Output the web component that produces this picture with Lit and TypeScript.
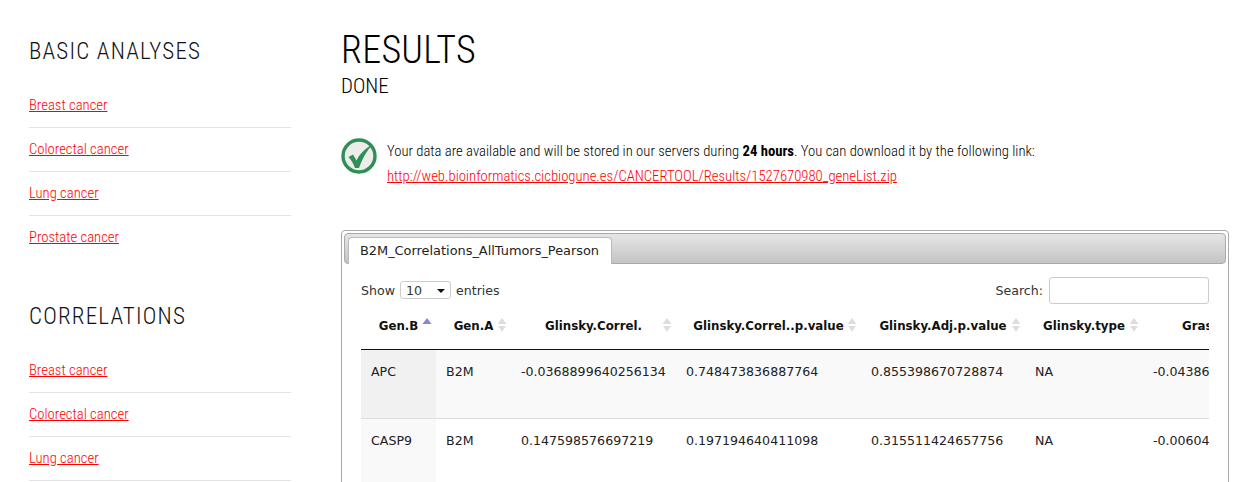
import { LitElement, html, css, svg } from "lit";
import { customElement } from "lit/decorators.js";

const sort = (active = false) => html`<svg class="sort" width="12" height="16" viewBox="0 0 12 16">
  <path d="M6 1 L10.5 7 H1.5 Z" fill=${active ? "#8487d6" : "#dedede"}></path>
  ${active ? "" : svg`<path d="M6 15 L10 9 H2 Z" fill="#dedede"></path>`}
</svg>`;

@customElement("app-root")
export class AppRoot extends LitElement {
  static styles = css`
    :host { display: block; height: 482px; overflow: hidden; background: #fff; font-family: "Roboto Condensed", Roboto, sans-serif; color: #000; }
    .page { display: grid; grid-template-columns: 262px 888px; column-gap: 50px; padding: 0 0 0 29px; }
    .cond { font-stretch: 75%; }
    h2 { margin: 0; font-weight: 300; font-size: 23px; line-height: 30px; letter-spacing: 1.2px; color: #111; }
    .side h2.first { margin-top: 37px; }
    .side h2.second { margin-top: 43px; }
    ul { list-style: none; margin: 17px 0 0; padding: 0; }
    li { padding: 11px 0; line-height: 21px; border-bottom: 1px solid #e3e3e3; font-size: 14.7px; font-weight: 300; }
    li:last-child { border-bottom: none; }
    a { color: #f00; text-decoration: underline; }
    h1 { margin: 30px 0 0; font-weight: 300; font-size: 38px; line-height: 40px; letter-spacing: 0.3px; }
    h3 { margin: 3px 0 0; font-weight: 300; font-size: 21px; line-height: 26px; }
    .note { display: flex; gap: 10px; margin-top: 40px; font-size: 14.7px; line-height: 25px; font-weight: 300; color: #000; }
    .note svg { flex: none; margin-top: -1px; }
    .note b { font-weight: 700; color: #000; }
    .panel { margin-top: 41px; border: 1px solid #aaa; border-radius: 4px; height: 300px; padding: 2px 2px 0; font-family: "DejaVu Sans", Verdana, sans-serif; font-size: 12.6px; color: #222; }
    .tabs { height: 31px; border: 1px solid #aaa; border-radius: 4px; background: linear-gradient(#e6e6e6, #c4c4c4); padding: 3px 0 0 3px; box-sizing: border-box; }
    .tab { display: inline-block; width: 264px; height: 27px; margin-bottom: -1px; box-sizing: border-box; background: #fff; border: 1px solid #bbb; border-bottom: none; border-radius: 4px 4px 0 0; padding: 5px 0 0 11px; color: #222; font-size: 12.9px; line-height: 15px; white-space: nowrap; }
    .body { padding: 0 17px 0 17px; }
    .controls { display: flex; justify-content: space-between; align-items: center; height: 30px; margin-top: 11px; color: #333; }
    .controls .left, .controls .right { display: flex; align-items: center; gap: 5px; }
    .controls .right { gap: 6px; }
    .select { width: 51px; height: 18px; box-sizing: border-box; border: 1px solid #ccc; border-radius: 3px; display: flex; align-items: center; justify-content: space-between; padding: 0 5px; }
    .select i { width: 0; height: 0; border-left: 4px solid transparent; border-right: 4px solid transparent; border-top: 4px solid #111; margin-top: 1px; }
    .search { width: 160px; height: 27px; box-sizing: border-box; border: 1px solid #ccc; border-radius: 3px; background: #fff; }
    .wrap { overflow: hidden; margin-top: 5px; }
    table { border-collapse: collapse; table-layout: fixed; width: 955px; }
    th { position: relative; height: 39px; box-sizing: border-box; padding: 0 0 6px; text-align: center; font-size: 11.8px; font-weight: 700; color: #111; border-bottom: 1px solid #111; white-space: nowrap; }
    .sort { position: absolute; right: 3px; top: 7px; }
    td { padding: 14px 10px 0; height: 69px; box-sizing: border-box; vertical-align: top; white-space: nowrap; background: #f9f9f9; border-bottom: 1px solid #ddd; color: #222; line-height: 15px; }
    td.s { background: #f1f1f1; }
    tr.alt td { background: #fff; }
    tr.alt td.s { background: #f9f9f9; }
  `;

  private links(list: string[]) {
    return html`<ul>${list.map((l) => html`<li class="cond"><a href="#">${l}</a></li>`)}</ul>`;
  }

  render() {
    return html`<div class="page">
      <aside class="side">
        <h2 class="first cond">BASIC ANALYSES</h2>
        ${this.links(["Breast cancer", "Colorectal cancer", "Lung cancer", "Prostate cancer"])}
        <h2 class="second cond">CORRELATIONS</h2>
        ${this.links(["Breast cancer", "Colorectal cancer", "Lung cancer", "Prostate cancer"])}
      </aside>
      <main>
        <h1 class="cond">RESULTS</h1>
        <h3 class="cond">DONE</h3>
        <div class="note cond">
          <svg width="36" height="36" viewBox="0 0 36 36">
            <circle cx="18" cy="18" r="16" fill="#ecedea" stroke="#2f8f56" stroke-width="3.4"></circle>
            <path d="M7.5 19 L12 16.5 L15.5 22.5 C19 15.5 24 10.5 31.5 6.5 C25.5 13 21 21 18 30 L14 30 C12.5 26 10.5 22 7.5 19 Z" fill="#2f8f56"></path>
          </svg>
          <div>
            <div>Your data are available and will be stored in our servers during <b>24 hours</b>. You can download it by the following link:</div>
            <div><a href="#">http://web.bioinformatics.cicbiogune.es/CANCERTOOL/Results/1527670980_geneList.zip</a></div>
          </div>
        </div>
        <section class="panel">
          <div class="tabs"><div class="tab">B2M_Correlations_AllTumors_Pearson</div></div>
          <div class="body">
            <div class="controls">
              <div class="left">Show <div class="select">10<i></i></div> entries</div>
              <div class="right">Search: <div class="search"></div></div>
            </div>
            <div class="wrap">
              <table>
                <colgroup><col style="width:75px"><col style="width:75px"><col style="width:165px"><col style="width:185px"><col style="width:164px"><col style="width:118px"><col style="width:173px"></colgroup>
                <thead><tr>
                  <th>Gen.B${sort(true)}</th>
                  <th>Gen.A${sort()}</th>
                  <th>Glinsky.Correl.${sort()}</th>
                  <th>Glinsky.Correl..p.value${sort()}</th>
                  <th>Glinsky.Adj.p.value${sort()}</th>
                  <th>Glinsky.type${sort()}</th>
                  <th>Grasso.Correl.${sort()}</th>
                </tr></thead>
                <tbody>
                  <tr><td class="s">APC</td><td>B2M</td><td>-0.0368899640256134</td><td>0.748473836887764</td><td>0.855398670728874</td><td>NA</td><td>-0.0438651234</td></tr>
                  <tr class="alt"><td class="s">CASP9</td><td>B2M</td><td>0.147598576697219</td><td>0.197194640411098</td><td>0.315511424657756</td><td>NA</td><td>-0.0060412345</td></tr>
                </tbody>
              </table>
            </div>
          </div>
        </section>
      </main>
    </div>`;
  }
}
